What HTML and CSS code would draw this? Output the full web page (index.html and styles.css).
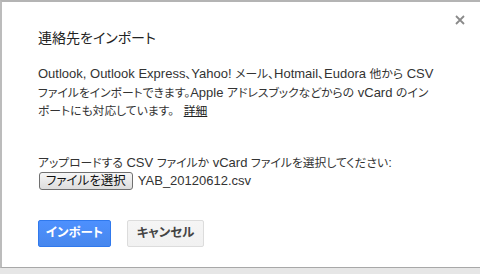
FILE: index.html
```html
<!DOCTYPE html>
<html lang="ja">
<head>
<meta charset="utf-8">
<link rel="stylesheet" href="styles.css">
</head>
<body>
<div class="dialog">
  <svg class="close" width="10" height="10" viewBox="0 0 10 10"><path d="M1 1L9 9M9 1L1 9" stroke="#8a8a8a" stroke-width="1.8" fill="none"/></svg>
  <h1 class="title">連絡先をインポート</h1>
  <p class="desc">Outlook, Outlook Express<span class="ja">、</span>Yahoo! <span class="ja">メール、</span>Hotmail<span class="ja">、</span>Eudora <span class="ja">他から</span> CSV<br><span class="ja">ファイルをインポートできます。</span>Apple <span class="ja">アドレスブックなどからの</span> vCard <span class="ja">のイン</span><br><span class="ja">ポートにも対応しています。</span> <a class="link ja" href="#">詳細</a></p>
  <div class="upload">
    <div class="label"><span class="ja">アップロードする</span> CSV <span class="ja">ファイルか</span> vCard <span class="ja">ファイルを選択してください</span>:</div>
    <div class="file-row"><span class="file-btn"><span class="ja">ファイルを選択</span></span><span class="file-name">YAB_20120612.csv</span></div>
  </div>
  <div class="actions">
    <span class="btn btn-primary">インポート</span>
    <span class="btn btn-default">キャンセル</span>
  </div>
</div>
</body>
</html>
```
FILE: styles.css
```css
html, body {
  margin: 0;
  padding: 0;
}
body {
  width: 480px;
  height: 274px;
  overflow: hidden;
  background: #e6e6e6;
  font-family: "Liberation Sans", "Noto Sans CJK JP", sans-serif;
  font-feature-settings: "palt";
  color: #333;
}
.dialog {
  position: relative;
  box-sizing: border-box;
  height: 268px;
  width: 490px;
  background: #fff;
  border-top: 2px solid #b4b4b4;
  border-left: 2px solid #bcbcbc;
  border-bottom: 1px solid #a8a8a8;
  padding: 25px 0 0 36px;
}
.close {
  position: absolute;
  top: 13px;
  left: 453px;
}
.title {
  margin: 0;
  font-size: 14px;
  font-weight: normal;
  line-height: 22px;
  color: #222;
}
.desc {
  margin: 16px 0 0;
  font-size: 13px;
  line-height: 17.5px;
}
.ja {
  font-size: 11.8px;
}
.link {
  color: #222;
  text-decoration: underline;
  margin-left: 6px;
}
.upload {
  margin-top: 33px;
  font-size: 13px;
}
.label {
  line-height: 17px;
}
.file-row {
  display: flex;
  align-items: center;
  margin-top: 0;
}
.file-btn {
  box-sizing: border-box;
  height: 18px;
  line-height: 16px;
  padding: 0 6px;
  margin-left: 1px;
  border: 1px solid #707070;
  border-radius: 3px;
  background: linear-gradient(#f6f6f6, #dddddd);
  color: #111;
}
.file-btn .ja {
  font-size: 12.5px;
}
.file-name {
  margin-left: 5px;
}
.actions {
  display: flex;
  gap: 16px;
  margin-top: 30px;
}
.btn {
  box-sizing: border-box;
  height: 27px;
  line-height: 25px;
  font-size: 12.5px;
  font-weight: bold;
  text-align: center;
  border-radius: 2px;
}
.btn-primary {
  width: 73px;
  background: linear-gradient(#4d90fe, #4787ed);
  border: 1px solid #3079ed;
  color: #fff;
}
.btn-default {
  width: 77px;
  background: linear-gradient(#f5f5f5, #f1f1f1);
  border: 1px solid #dcdcdc;
  color: #444;
}
```
